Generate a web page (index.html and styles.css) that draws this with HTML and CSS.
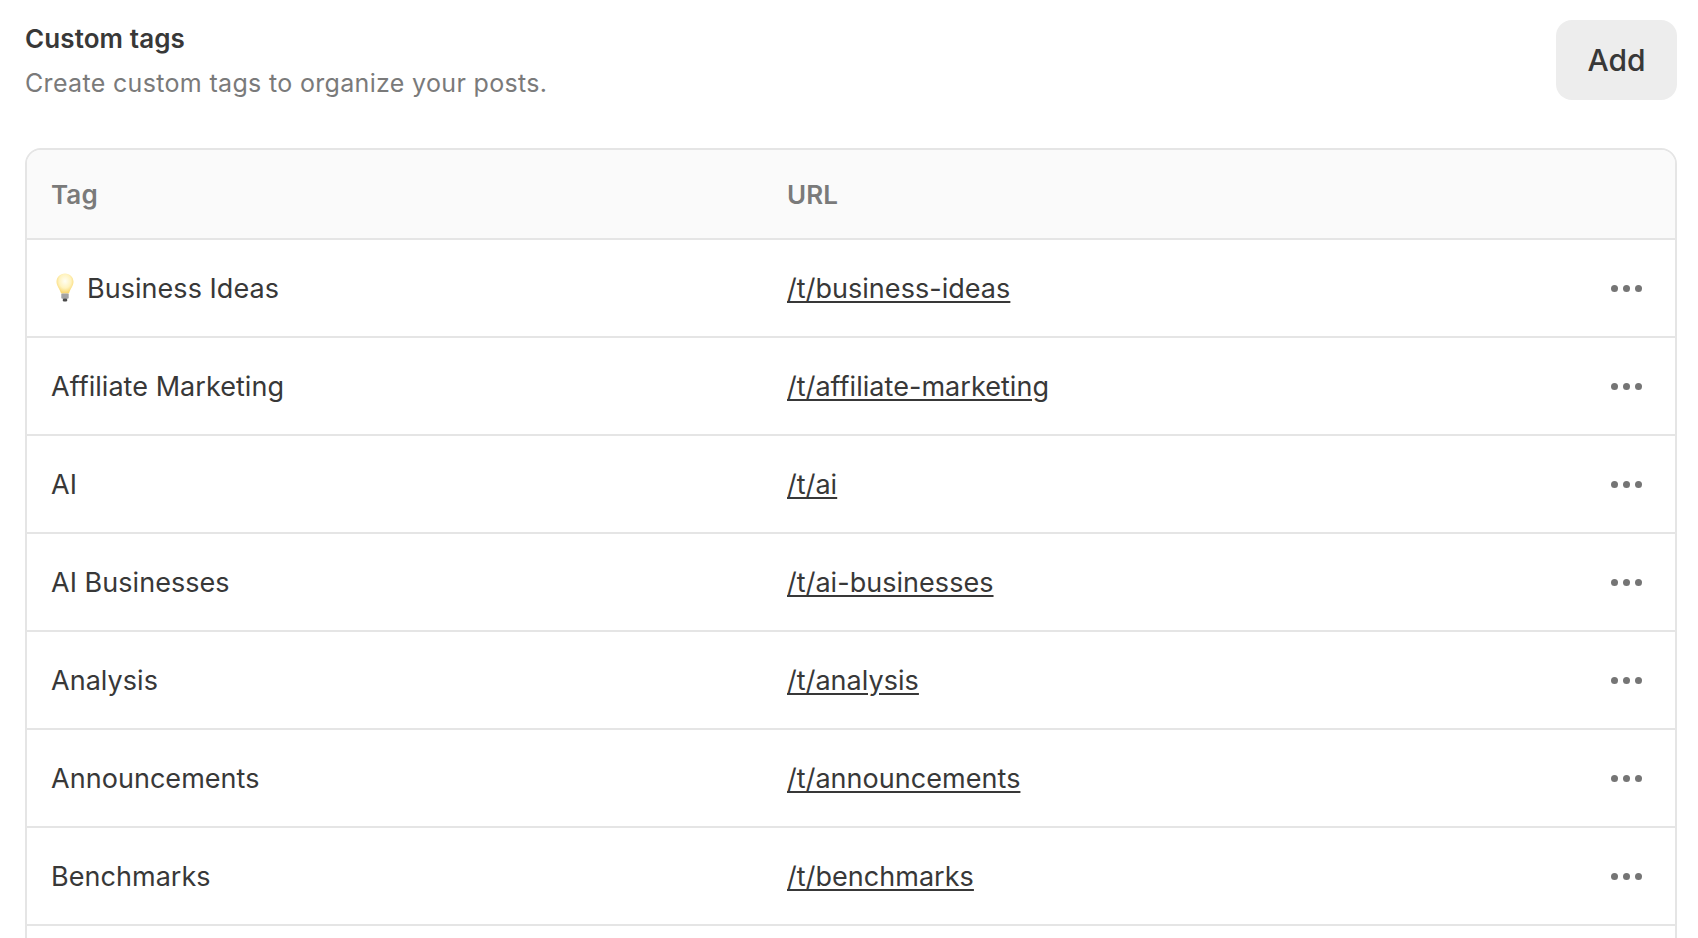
FILE: index.html
```html
<!DOCTYPE html>
<html lang="en">
<head>
<meta charset="utf-8">
<title>Custom tags</title>
<link rel="stylesheet" href="styles.css">
</head>
<body>
<main class="page">
  <header class="head">
    <div class="head-text">
      <h1 class="title">Custom tags</h1>
      <p class="sub">Create custom tags to organize your posts.</p>
    </div>
    <button class="add" type="button">Add</button>
  </header>
  <div class="table">
    <div class="row row-head"><div class="c-tag">Tag</div><div class="c-url">URL</div></div>
    <div class="row">
      <div class="c-tag"><svg class="bulb" viewBox="0 0 18 29" aria-hidden="true"><defs><radialGradient id="glow" cx="50%" cy="38%" r="58%"><stop offset="0" stop-color="#fffef4"/><stop offset="0.6" stop-color="#fff3bf"/><stop offset="1" stop-color="#f9d873"/></radialGradient></defs><path d="M9 0.500C4 0.500 0.500 4.300 0.500 8.800c0 4.500 3.300 6.700 4.500 11.700h8c1.200-5 4.500-7.200 4.500-11.700C17.500 4.300 14 0.500 9 0.500z" fill="url(#glow)"/><rect x="5.300" y="20.500" width="7.400" height="5.200" rx="1" fill="#a3a3a3"/><rect x="6.800" y="25.500" width="4.400" height="3" rx="1.200" fill="#4a4a4a"/></svg>Business Ideas</div>
      <div class="c-url"><a href="#">/t/business-ideas</a></div>
      <div class="c-more"><span></span><span></span><span></span></div>
    </div>
    <div class="row"><div class="c-tag">Affiliate Marketing</div><div class="c-url"><a href="#">/t/affiliate-marketing</a></div><div class="c-more"><span></span><span></span><span></span></div></div>
    <div class="row"><div class="c-tag">AI</div><div class="c-url"><a href="#">/t/ai</a></div><div class="c-more"><span></span><span></span><span></span></div></div>
    <div class="row"><div class="c-tag">AI Businesses</div><div class="c-url"><a href="#">/t/ai-businesses</a></div><div class="c-more"><span></span><span></span><span></span></div></div>
    <div class="row"><div class="c-tag">Analysis</div><div class="c-url"><a href="#">/t/analysis</a></div><div class="c-more"><span></span><span></span><span></span></div></div>
    <div class="row"><div class="c-tag">Announcements</div><div class="c-url"><a href="#">/t/announcements</a></div><div class="c-more"><span></span><span></span><span></span></div></div>
    <div class="row"><div class="c-tag">Benchmarks</div><div class="c-url"><a href="#">/t/benchmarks</a></div><div class="c-more"><span></span><span></span><span></span></div></div>
    <div class="row"></div>
  </div>
</main>
</body>
</html>
```
FILE: styles.css
```css
* { box-sizing: border-box; }
html, body { margin: 0; height: 100%; overflow: hidden; background: #fff; }
body { font-family: Inter, "Noto Sans", sans-serif; color: #383838; }
.page { padding: 20px 21px 0 25px; }
.head { display: flex; justify-content: space-between; align-items: flex-start; height: 128px; }
.title { margin: 4px 0 0; font-size: 26px; line-height: 30px; font-weight: 600; letter-spacing: 0.1px; color: #383838; }
.sub { margin: 14px 0 0; font-size: 25px; line-height: 30px; font-weight: 400; letter-spacing: 0.33px; color: #7a7a7a; }
.add { width: 121px; height: 80px; border: 0; border-radius: 16px; background: #ededed; color: #383838; font: 500 30px Inter, sans-serif; }
.table { border: 2px solid #e5e5e5; border-radius: 16px; overflow: hidden; }
.row { display: grid; grid-template-columns: 736px 1fr auto; align-items: center; height: 98px; padding: 0 33px 0 24px; border-top: 2px solid #e5e5e5; font-size: 27px; letter-spacing: 0.04px; color: #383838; }
.row-head { height: 88px; border-top: 0; background: #fafafa; font-size: 26px; font-weight: 600; letter-spacing: 0.1px; color: #7a7a7a; }
.c-tag { display: flex; align-items: center; }
.bulb { width: 18px; height: 29px; margin: -1px 13px 0 5px; flex: none; }
.c-url a { color: #383838; text-decoration: underline; text-underline-offset: 3px; }
.c-more { display: flex; gap: 5px; }
.c-more span { width: 7px; height: 7px; border-radius: 50%; background: #757575; }
```
